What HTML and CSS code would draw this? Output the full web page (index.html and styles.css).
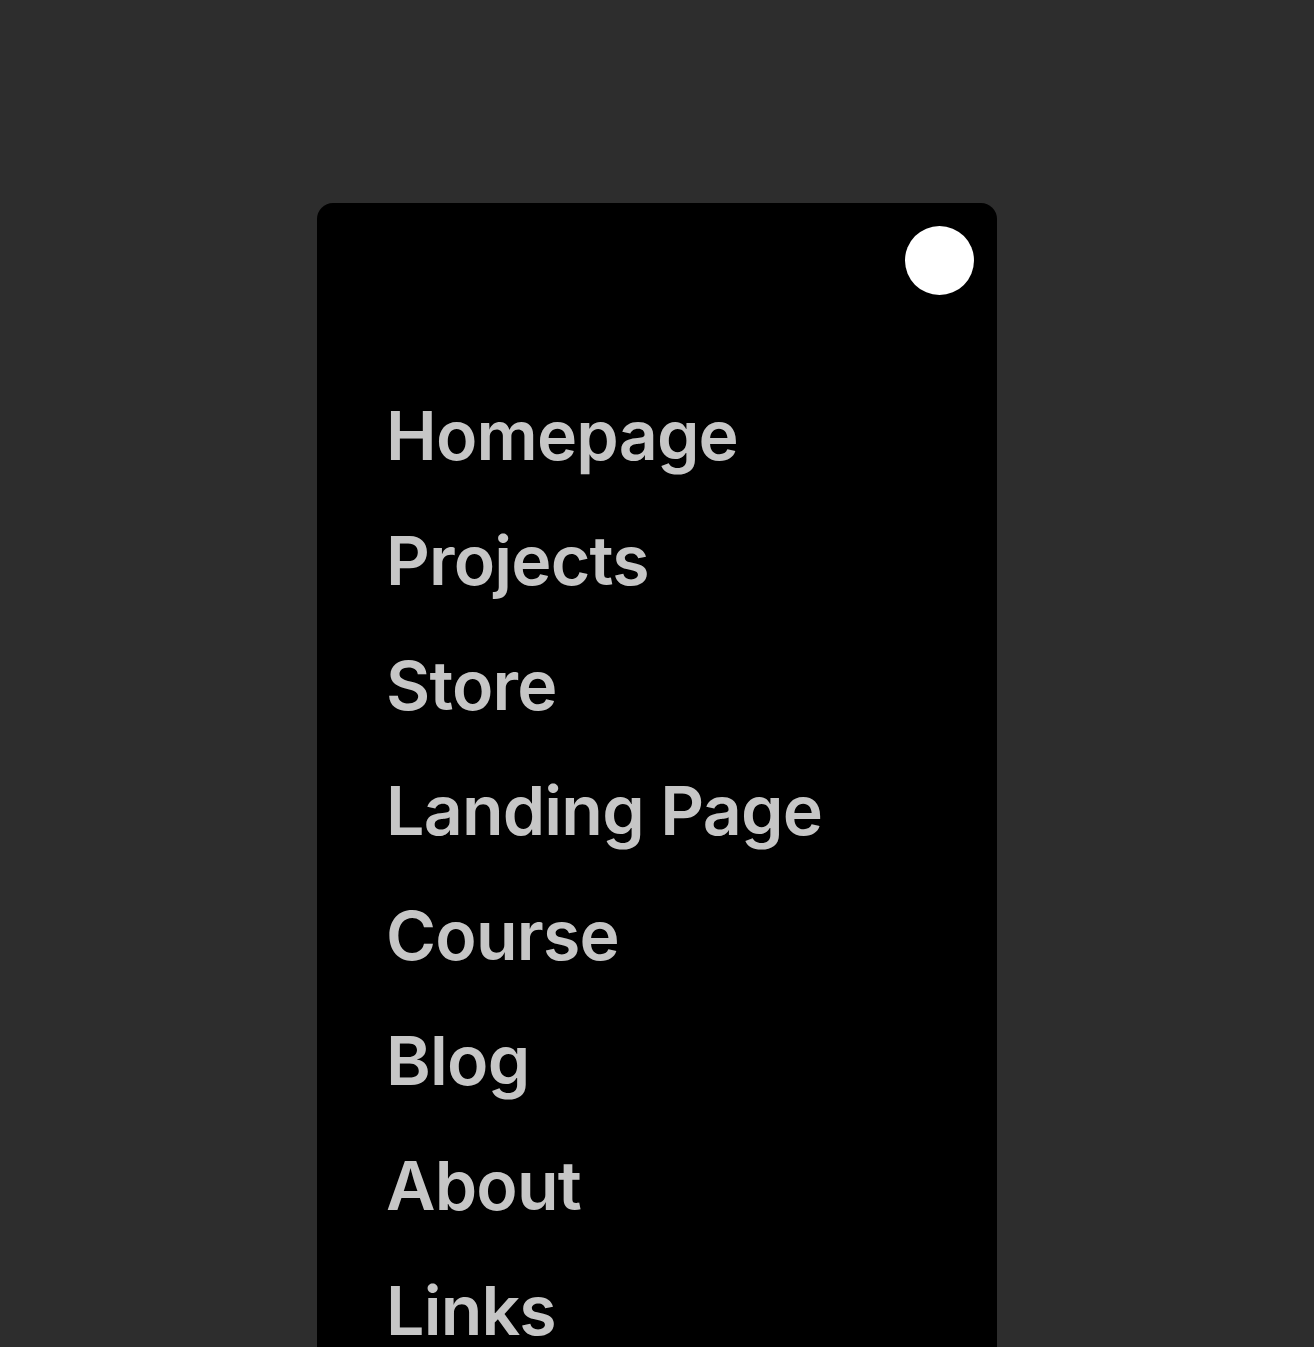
FILE: index.html
```html
<!DOCTYPE html>
<html lang="en">
<head>
    <meta charset="UTF-8">
    <meta name="viewport" content="width=device-width, initial-scale=1.0">
    <title>Menu</title>
    <link rel="stylesheet" href="styles.css">
</head>
<body>
    <div class="menu">
        <div class="menu-top">
            <button class="close-dot" aria-label="Close menu"></button>
        </div>
        <nav class="menu-links">
            <a href="#">Homepage</a>
            <a href="#">Projects</a>
            <a href="#">Store</a>
            <a href="#">Landing Page</a>
            <a href="#">Course</a>
            <a href="#">Blog</a>
            <a href="#">About</a>
            <a href="#">Links</a>
        </nav>
    </div>
</body>
</html>
```

FILE: styles.css
```css
html, body {
    height: 100%;
}
body {
    margin: 0;
    background: #2d2d2d;
    font-family: Inter, "Noto Sans", sans-serif;
    overflow: hidden;
}
.menu {
    width: 680px;
    min-height: 1300px;
    margin: 203px auto 0;
    background: #000;
    border-radius: 16px;
}
.menu-top {
    display: flex;
    justify-content: flex-end;
    padding: 23px 23px 0;
}
.close-dot {
    width: 69px;
    height: 69px;
    border: none;
    border-radius: 50%;
    background: #fff;
    padding: 0;
    cursor: pointer;
}
.menu-links {
    display: flex;
    flex-direction: column;
    padding-left: 69px;
    margin-top: 78px;
}
.menu-links a {
    color: #c6c6c6;
    text-decoration: none;
    font-size: 68px;
    font-weight: 600;
    line-height: 125px;
    letter-spacing: -0.8px;
}
```
